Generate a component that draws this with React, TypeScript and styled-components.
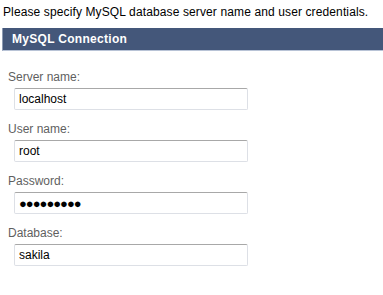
import React from 'react';
import styled, { createGlobalStyle } from 'styled-components';

const GlobalStyle = createGlobalStyle`
  body {
    margin: 0;
    background: #fff;
    font-family: "Liberation Sans", Arial, sans-serif;
  }
`;

const Page = styled.div`
  width: 383px;
  height: 295px;
  overflow: hidden;
  background: #fff;
`;

const Intro = styled.div`
  padding: 5px 0 0 3px;
  height: 28px;
  box-sizing: border-box;
  font-size: 12px;
  letter-spacing: 0.12px;
  line-height: 15px;
  color: #000;
  white-space: nowrap;
`;

const Header = styled.div`
  margin-left: 2px;
  height: 23px;
  box-sizing: border-box;
  display: flex;
  align-items: center;
  padding-left: 9px;
  background: #44577a;
  border-left: 1px solid #8d9bb3;
  border-bottom: 1px solid #b8c3d6;
  color: #fff;
  font-weight: bold;
  font-size: 12px;
  letter-spacing: 0.3px;
`;

const Form = styled.div`
  display: flex;
  flex-direction: column;
  padding: 19px 0 0 8px;
  gap: 12px;
`;

const Field = styled.div`
  display: flex;
  flex-direction: column;
  gap: 3px;
`;

const Label = styled.div`
  font-size: 12px;
  color: #5f5f5f;
  line-height: 15px;
`;

const Input = styled.div<{ $secret?: boolean }>`
  margin-left: 6px;
  width: 234px;
  height: 22px;
  box-sizing: border-box;
  display: flex;
  align-items: center;
  padding-left: 4px;
  border: 1px solid #dde0e6;
  border-top-color: #a8a8a8;
  border-radius: 2px;
  font-size: ${(p) => (p.$secret ? '13px' : '12px')};
  letter-spacing: ${(p) => (p.$secret ? '-1px' : '0')};
  color: #000;
`;

const fields = [
  { label: 'Server name:', value: 'localhost' },
  { label: 'User name:', value: 'root' },
  { label: 'Password:', value: '●●●●●●●●●', secret: true },
  { label: 'Database:', value: 'sakila' },
];

export default function App() {
  return (
    <Page>
      <GlobalStyle />
      <Intro>Please specify MySQL database server name and user credentials.</Intro>
      <Header>MySQL Connection</Header>
      <Form>
        {fields.map((f) => (
          <Field key={f.label}>
            <Label>{f.label}</Label>
            <Input $secret={f.secret}>{f.value}</Input>
          </Field>
        ))}
      </Form>
    </Page>
  );
}
